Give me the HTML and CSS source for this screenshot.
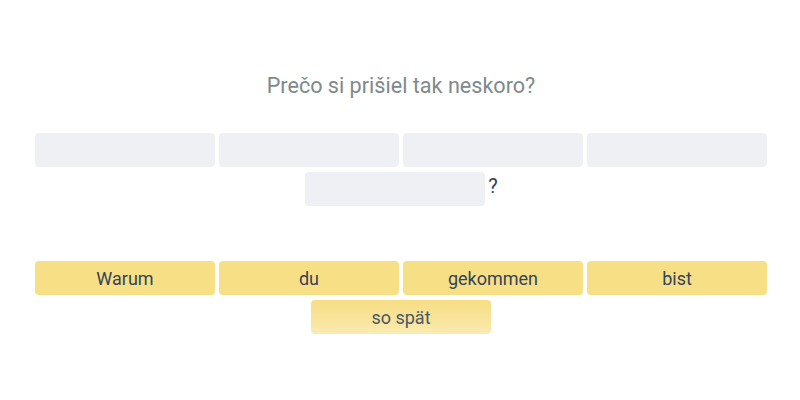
FILE: index.html
```html
<!DOCTYPE html>
<html lang="sk">
<head>
<meta charset="utf-8">
<link rel="stylesheet" href="styles.css">
</head>
<body>
<main class="exercise">
  <h1 class="prompt">Prečo si prišiel tak neskoro?</h1>
  <div class="answer">
    <span class="blank"></span>
    <span class="blank"></span>
    <span class="blank"></span>
    <span class="blank"></span>
    <span class="blank-group"><span class="blank"></span><span class="punct">?</span></span>
  </div>
  <div class="bank">
    <button class="chip">Warum</button>
    <button class="chip">du</button>
    <button class="chip">gekommen</button>
    <button class="chip">bist</button>
    <button class="chip chip-fading">so spät</button>
  </div>
</main>
</body>
</html>
```

FILE: styles.css
```css
* { box-sizing: border-box; }
html, body { margin: 0; padding: 0; background: #ffffff; }
body {
  font-family: Roboto, "Liberation Sans", sans-serif;
  width: 800px;
  height: 400px;
}
.exercise {
  width: 732px;
  margin-left: 35px;
  padding-top: 72px;
}
.prompt {
  margin: 0;
  text-align: center;
  font-size: 21.6px;
  font-weight: 400;
  line-height: 28px;
  color: #7e8a8c;
}
.answer {
  margin-top: 33px;
  display: flex;
  flex-wrap: wrap;
  justify-content: center;
  gap: 5px 4px;
}
.blank {
  display: block;
  width: 180px;
  height: 34px;
  background: #eff0f4;
  border-radius: 4px;
}
.blank-group {
  display: flex;
  align-items: flex-start;
  padding-left: 1px;
}
.punct {
  margin-left: 3px;
  font-size: 20px;
  line-height: 28px;
  color: #34435a;
}
.bank {
  margin-top: 55px;
  display: flex;
  flex-wrap: wrap;
  justify-content: center;
  gap: 5px 4px;
}
.chip {
  width: 180px;
  height: 34px;
  border: 0;
  padding: 0;
  border-radius: 4px;
  background: #f7df85;
  font-family: Roboto, "Liberation Sans", sans-serif;
  font-size: 18px;
  color: #34435a;
}
.chip-fading {
  background: linear-gradient(to bottom, #f7de84 0%, #f8e49c 60%, #f9ebb4 100%);
  color: #4b5666;
}
```
